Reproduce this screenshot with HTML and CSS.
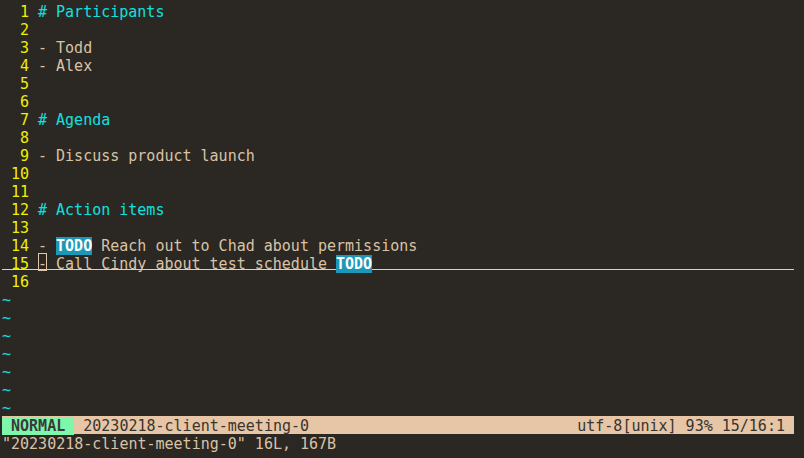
FILE: index.html
```html
<!DOCTYPE html>
<html>
<head>
<meta charset="utf-8">
<link rel="stylesheet" href="styles.css">
</head>
<body>
<div class="screen">
  <div class="row"><span class="nr">  1 </span><span class="h"># Participants</span></div>
  <div class="row"><span class="nr">  2 </span></div>
  <div class="row"><span class="nr">  3 </span>- Todd</div>
  <div class="row"><span class="nr">  4 </span>- Alex</div>
  <div class="row"><span class="nr">  5 </span></div>
  <div class="row"><span class="nr">  6 </span></div>
  <div class="row"><span class="nr">  7 </span><span class="h"># Agenda</span></div>
  <div class="row"><span class="nr">  8 </span></div>
  <div class="row"><span class="nr">  9 </span>- Discuss product launch</div>
  <div class="row"><span class="nr"> 10 </span></div>
  <div class="row"><span class="nr"> 11 </span></div>
  <div class="row"><span class="nr"> 12 </span><span class="h"># Action items</span></div>
  <div class="row"><span class="nr"> 13 </span></div>
  <div class="row"><span class="nr"> 14 </span>- <span class="todo">TODO</span> Reach out to Chad about permissions</div>
  <div class="row cursorline"><span class="nr"> 15 </span><span class="cltext">- Call Cindy about test schedule <span class="todo">TODO</span></span></div>
  <div class="row"><span class="nr"> 16 </span></div>
  <div class="row tilde">~</div>
  <div class="row tilde">~</div>
  <div class="row tilde">~</div>
  <div class="row tilde">~</div>
  <div class="row tilde">~</div>
  <div class="row tilde">~</div>
  <div class="row tilde">~</div>
  <div class="row status"><span class="left"><span class="mode"> NORMAL </span> 20230218-client-meeting-0</span><span class="right">utf-8[unix] 93% 15/16:1 </span></div>
  <div class="row">"20230218-client-meeting-0" 16L, 167B</div>
</div>
</body>
</html>
```

FILE: styles.css
```css
html, body {
  margin: 0;
  padding: 0;
  background: #2b2722;
}
.screen {
  padding: 2px;
  width: 792px;
  font-family: "DejaVu Sans Mono", monospace;
  font-size: 15px;
  color: #d9c3a6;
}
.row {
  height: 17px;
  padding-top: 1px;
  line-height: 18px;
  white-space: pre;
}
.nr {
  color: #f0f000;
  display: inline-block;
  width: 36px;
}
.h {
  color: #0fe0e0;
}
.todo {
  background: #1b98b8;
  color: #ffffff;
  font-weight: bold;
}
.cursorline {
  display: flex;
}
.cursorline .nr {
  background: linear-gradient(#f0f000, #f0f000) 0 14px / 100% 1px no-repeat;
}
.cltext {
  flex: 1;
  position: relative;
  background: linear-gradient(#e8cfae, #e8cfae) 0 14px / 100% 1px no-repeat;
}
.cltext::before {
  content: "";
  position: absolute;
  left: 0;
  top: -2px;
  width: 9px;
  height: 18px;
  box-sizing: border-box;
  border: 1px solid #e0c6a6;
}
.tilde {
  color: #0fe0e0;
}
.status {
  display: flex;
  justify-content: space-between;
  background: #e6c6a6;
  color: #3a342e;
}
.mode {
  background: #7ef7aa;
  color: #3a3a3a;
  font-weight: bold;
}
```
